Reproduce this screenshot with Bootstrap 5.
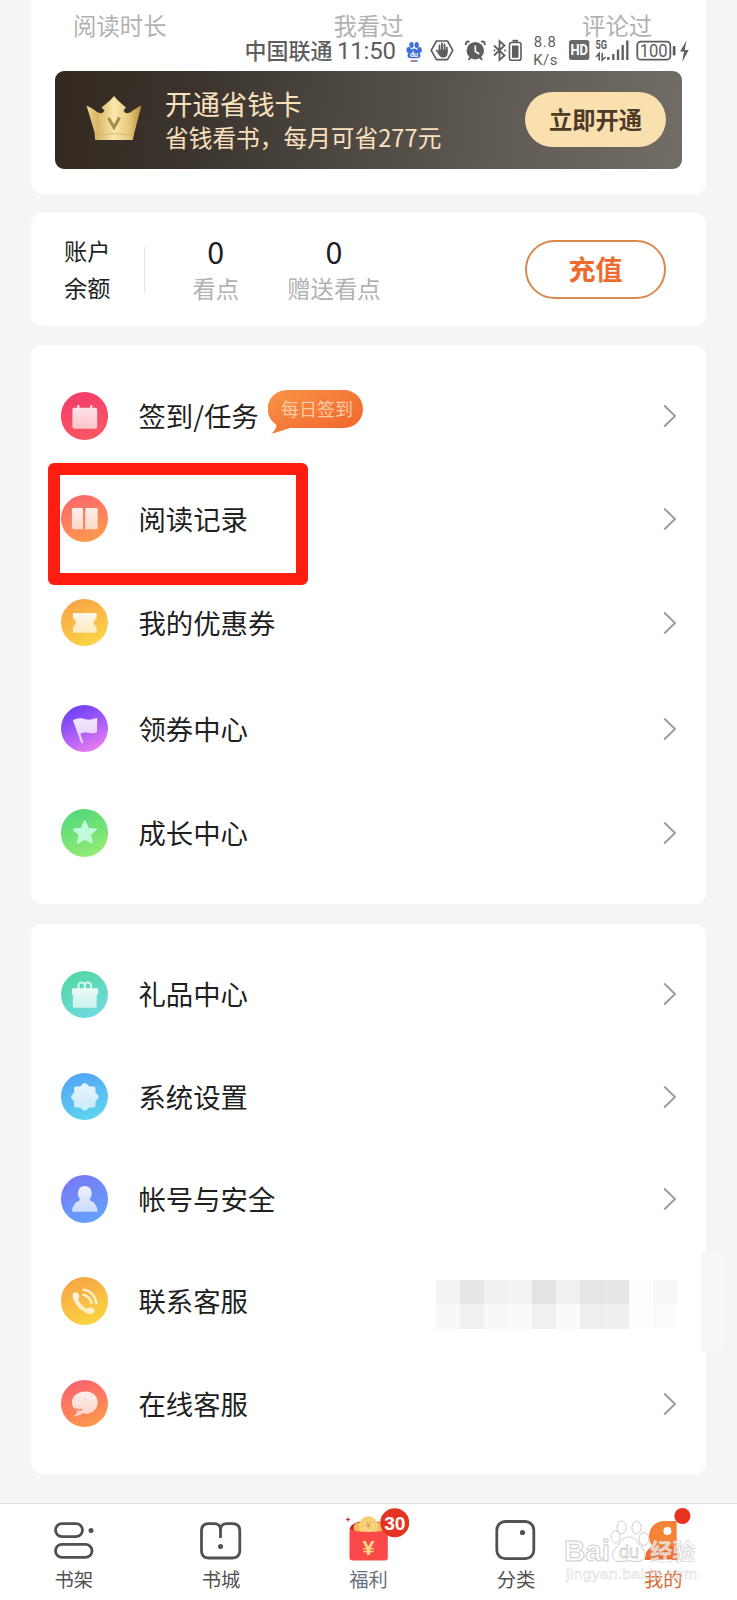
<!DOCTYPE html>
<html lang="zh-CN">
<head>
<meta charset="utf-8">
<meta name="viewport" content="width=device-width, initial-scale=1">
<title>我的</title>
<link rel="stylesheet" href="https://cdn.jsdelivr.net/npm/bootstrap@5.3.0/dist/css/bootstrap.min.css">
<style>
body{background:#f5f5f5;font-family:"Noto Sans CJK SC",sans-serif;color:#1f1f1f;width:737px;height:1600px;overflow:hidden}
svg{display:block;flex:none}
.panel{margin:0 31px;background:#fff;border-radius:11px;position:relative}
.muted{color:#b2b2b2;font-size:23.4px;line-height:30px}
/* header card */
.head-card{height:194px;border-radius:0 0 11px 11px;padding:10px 24px 0}
.stats{height:61px;margin:0 -59.5px}
.promo{height:98px;border-radius:9px;background:linear-gradient(97deg,#33291f 0,#3b342e 22%,#504a45 50%,#635e58 76%,#716d66 100%);padding:0 16px 0 31px;color:#fbe0bd}
.crown{margin-top:-4px}
.promo-title{font-size:27.4px;line-height:34px}
.promo-sub{font-size:23.7px;line-height:35px}
.promo-btn{width:141px;height:55px;margin-top:-1px;padding-bottom:1px;background:#fbe0af;color:#4b3b27;font-weight:700;font-size:23.3px}
/* status bar */
.status{top:34px;left:240px;height:34px;color:#5e5e5e}
/* balance */
.balance{height:112.5px;margin-top:19.3px;padding:0 40px 0 33px}
.bal-name{font-size:23.2px;line-height:37px;margin-top:-2px}
.bal-line{width:1px;height:46px;background:#e3e3e3}
.bal-num{font-size:30.5px;line-height:36px;margin-top:-4px;margin-bottom:4px}
.charge{width:141px;height:59px;border:2.4px solid #d78a4d;color:#ef6a2c;font-weight:700;font-size:27px}
/* menu */
.menu-a{height:558.5px;margin-top:19.5px;padding:19.8px 29px 0 29.8px;display:grid;grid-template-rows:102.4px 102.2px 105.8px 106.2px 103.2px}
.menu-b{height:550px;margin-top:20.2px;padding:19.2px 29px 0 29.8px;display:grid;grid-template-rows:repeat(5,102.3px)}
.item{font-size:27.4px;line-height:40px}
.disc{width:47.6px;height:47.6px;border-radius:50%;margin-right:30px;flex:none}
.label{margin-top:-2px}
.c1{background:linear-gradient(160deg,#f23a6c,#fb5b60)}
.c2{background:linear-gradient(160deg,#fb6270,#fda048)}
.c3{background:linear-gradient(155deg,#f79e48,#fbdc45)}
.c4{background:linear-gradient(155deg,#6b3ff5 10%,#a55cf8 50%,#fb86ee)}
.c5{background:linear-gradient(160deg,#4cd67b,#9cee72)}
.c6{background:linear-gradient(155deg,#50d69a,#74dbe8)}
.c7{background:linear-gradient(160deg,#519ff8,#5fdcea)}
.c8{background:linear-gradient(155deg,#7c74f7,#5fa9fb)}
.c9{background:linear-gradient(155deg,#f79e48,#fbdc3f)}
.c10{background:linear-gradient(160deg,#fb5b72,#fda048)}
.go{margin-left:auto}
.tip{margin:-8px 0 0 9.5px}
.frame{left:16.6px;top:118px;width:260.7px;height:121.7px;border:12.2px solid #ff1e10;border-radius:6px}
.mosaic{display:grid;grid-template:24.3px 24.3px/repeat(10,24.15px);margin:6px 0 0 auto}
.patch{left:669.7px;top:328.5px;width:23px;height:99px;background:#f6f6f6}
/* tab bar */
.tabs{margin-top:29.3px;height:97px;background:#fff;border-top:1.5px solid #dedede}
.tab{flex:1 1 0;font-size:19.3px;line-height:28px;color:#515151;padding-top:1px}
.on{color:#d9662c}
.water{left:560px;top:1515px}
</style>
</head>
<body class="position-relative">
<svg width="0" height="0" class="position-absolute">
  <defs>
    <linearGradient id="glass" x1="0" y1="0" x2="0" y2="1"><stop offset="0" stop-color="#fff" stop-opacity=".88"/><stop offset="1" stop-color="#fff" stop-opacity=".66"/></linearGradient>
    <linearGradient id="gold" x1="0" y1="0" x2="1" y2="0"><stop offset="0" stop-color="#f0d68d"/><stop offset=".2" stop-color="#d9b767"/><stop offset=".5" stop-color="#f9e7ac"/><stop offset=".78" stop-color="#e6c87b"/><stop offset="1" stop-color="#b98d3a"/></linearGradient>
    <linearGradient id="orange" x1="0" y1="0" x2="1" y2="1"><stop offset="0" stop-color="#f99447"/><stop offset="1" stop-color="#f0622a"/></linearGradient>
    <symbol id="chev" viewBox="0 0 14 24"><path d="M1.2 1.5 12 12 1.2 22.5" fill="none" stroke="#9b9b9b" stroke-width="1.9"/></symbol>
  </defs>
</svg>

<section class="panel head-card">
  <div class="stats d-flex text-center muted">
    <div class="flex-fill w-100">阅读时长</div><div class="flex-fill w-100">我看过</div><div class="flex-fill w-100">评论过</div>
  </div>
  <div class="promo d-flex align-items-center">
    <svg class="crown" width="56" height="46" viewBox="0 0 56 46"><path d="M.5 10.500Q8 14 11 17Q13 18.500 16.500 18L18.500 15.500L15.500 12.500Q24 6 28 1Q32 6 40 12.500L37.500 15.500L39.500 18Q43 18.500 45 17Q48 14 55.500 10.500L48.500 37L46.800 45H9.200L8.500 37Z" fill="url(#gold)"/><path d="M9 40Q28 37.500 47.500 40" stroke="#d2af65" stroke-width=".8" fill="none"/><path d="M22.500 23 28 32.500 33.500 22.500" stroke="#a58a4b" stroke-width="3" fill="none"/></svg>
    <div style="margin-left:23px"><div class="promo-title">开通省钱卡</div><div class="promo-sub">省钱看书，每月可省277元</div></div>
    <div class="promo-btn rounded-pill ms-auto d-flex align-items-center justify-content-center">立即开通</div>
  </div>
</section>

<div class="status position-absolute">
<svg width="460" height="34" viewBox="240 34 460 34" fill="#5e5e5e">
  <text x="244.500" y="58.900" font-size="22" font-weight="500">中国联通</text>
  <text x="337" y="59" font-size="24" font-family="Roboto, sans-serif" textLength="59">11:50</text>
  <g fill="#3f6fd8"><ellipse cx="408.700" cy="50" rx="2.300" ry="3"/><ellipse cx="411.500" cy="45" rx="2.200" ry="2.900"/><ellipse cx="416.700" cy="45" rx="2.200" ry="2.900"/><ellipse cx="419.500" cy="50" rx="2.300" ry="3"/><path d="M414 48.500c3 0 6.500 5 6.500 7.300s-3 2.500-6.500 2.500-6.500 0-6.500-2.500 3.500-7.300 6.500-7.300"/></g>
  <text x="410" y="57" font-size="7" font-weight="700" fill="#fff" font-family="Roboto">du</text><path d="M410.500 61h3.500" stroke="#d44" stroke-width="1.500"/><path d="M414 61h3.500" stroke="#3f6fd8" stroke-width="1.500"/>
  <path d="M436.500 41h11l5.300 9.300-5.300 9.400h-11l-5.300-9.400z" fill="none" stroke="#5e5e5e" stroke-width="1.700" stroke-linejoin="round"/>
  <path d="M439.500 51v-5.500M442 50v-6.500M444.500 50v-5.500M446.800 51v-3.500M436.700 50.500l3 3.500" stroke="#5e5e5e" stroke-width="1.800" stroke-linecap="round"/><path d="M438.600 49.500h9.100v3.500q-.5 4-3.200 4.500h-3q-2-1-3.500-4z"/>
  <circle cx="475.300" cy="50.700" r="8.700"/><path d="M469.500 41.800q-3.500-1.500-3.700 3.200M481.100 41.800q3.500-1.500 3.700 3.200M468.500 59.800l2.500-3M482.100 59.800l-2.500-3" fill="none" stroke="#5e5e5e" stroke-width="2"/><path d="M475.300 45.500v6l4 2.500" fill="none" stroke="#fff" stroke-width="1.600"/>
  <path d="M494 45.500 504.500 55.500 499.500 60V41L504.500 45.500 494 55.500" fill="none" stroke="#5e5e5e" stroke-width="1.800"/><circle cx="494.500" cy="50.500" r="1"/><circle cx="505" cy="50.500" r="1"/>
  <rect x="509.500" y="42.500" width="11.500" height="17.700" rx="2" fill="none" stroke="#5e5e5e" stroke-width="1.600"/><rect x="512" y="45.500" width="6.500" height="12.300"/><rect x="512.500" y="39.800" width="5.500" height="2"/>
  <g font-family="Roboto, sans-serif"><text x="533.800" y="46.800" font-size="14.800" textLength="22">8.8</text><text x="533.300" y="65" font-size="14.800" textLength="24">K/s</text></g>
  <rect x="569" y="40" width="20.300" height="20" rx="2.500" fill="#696969"/><text x="570.500" y="55.300" font-size="14" font-weight="700" fill="#fff" font-family="Roboto" textLength="17.500" lengthAdjust="spacingAndGlyphs">HD</text>
  <text x="595.500" y="49" font-size="12" font-weight="700" font-family="Roboto" textLength="11.500" lengthAdjust="spacingAndGlyphs">5G</text>
  <path d="M596 57l3.200-3.500v7M602.200 53v7l3.500-3" fill="none" stroke="#5e5e5e" stroke-width="1.600"/>
  <path d="M608.300 60v-3M613.300 60v-6M618 60V49.500M622.700 60V45M627.300 60V40.500" stroke="#5e5e5e" stroke-width="2.300"/>
  <rect x="637.300" y="41.700" width="33" height="18" rx="3.500" fill="none" stroke="#5e5e5e" stroke-width="1.800"/><text x="639.700" y="57" font-size="17.500" font-family="Roboto" textLength="28" lengthAdjust="spacingAndGlyphs">100</text><rect x="672.800" y="46" width="2.700" height="9.500" rx="1"/>
  <path d="M686.500 40.500 680 51.500h4l-1.800 10.500 6.500-12h-4z"/>
</svg>
</div>

<section class="panel balance d-flex align-items-center">
  <div class="bal-name">账户<br>余额</div>
  <div class="bal-line" style="margin-left:34px"></div>
  <div class="text-center" style="margin-left:47px"><div class="bal-num">0</div><div class="muted">看点</div></div>
  <div class="text-center" style="margin-left:48px"><div class="bal-num">0</div><div class="muted">赠送看点</div></div>
  <div class="charge rounded-pill ms-auto d-flex align-items-center justify-content-center">充值</div>
</section>

<section class="panel menu-a">
  <div class="item d-flex align-items-center"><div class="disc c1"><svg viewBox="0 0 48 48" fill="url(#glass)"><path d="M13.500 16h3v-3h2v3h11v-3h2v3h3q2 0 2 2v17q0 2-2 2h-21q-2 0-2-2V18q0-2 2-2z"/></svg></div><span class="label">签到/任务</span>
    <svg class="tip" width="96" height="46" viewBox="0 0 96 46"><path d="M20 1H76A19 19 0 0 1 76 39H22Q13 42 3 45Q8 41 8.500 36A19 19 0 0 1 20 1Z" fill="url(#orange)"/><text x="13" y="26.500" font-size="18" fill="#ffcaa3">每日签到</text></svg>
    <svg class="go" width="14" height="24"><use href="#chev"/></svg></div>
  <div class="item d-flex align-items-center"><div class="disc c2"><svg viewBox="0 0 48 48" fill="url(#glass)"><path d="M12.500 13H22.200V33.500Q23 34 22.500 35L21.500 34.500H12.500Q11 34.500 11 33V14.500Q11 13 12.500 13zM25.500 13H35.500Q37 13 37 14.500V33Q37 34.500 35.500 34.500H26L24.500 35.500V14z"/></svg></div><span class="label">阅读记录</span><svg class="go" width="14" height="24"><use href="#chev"/></svg></div>
  <div class="item d-flex align-items-center"><div class="disc c3"><svg viewBox="0 0 48 48" fill="url(#glass)"><path d="M13.500 14h21q1.500 0 1.500 1.500v4q-3 1.500-3 4.500t3 4.500v4q0 1.500-1.500 1.500h-21q-1.500 0-1.500-1.500v-4q3-1.500 3-4.500t-3-4.500v-4q0-1.500 1.500-1.500z"/></svg></div><span class="label">我的优惠券</span><svg class="go" width="14" height="24"><use href="#chev"/></svg></div>
  <div class="item d-flex align-items-center"><div class="disc c4"><svg viewBox="0 0 48 48" fill="url(#glass)"><path d="M12 15.500Q15 13 22 13.500Q26 15 29 15Q32 14 36 13Q37 13 36.500 15L36.300 27Q33 29.500 28 28Q23 27 19.500 29L22.500 37.500Q23 39 20.500 38.500Z"/></svg></div><span class="label">领券中心</span><svg class="go" width="14" height="24"><use href="#chev"/></svg></div>
  <div class="item d-flex align-items-center"><div class="disc c5"><svg viewBox="0 0 48 48" fill="#c0fbdc" stroke="#c0fbdc" stroke-width="2" stroke-linejoin="round"><path d="M24 12.500 27.300 19.800 35 20.700 29.300 26 31 34 24 30 17 34 18.700 26 13 20.700 20.700 19.800Z"/></svg></div><span class="label">成长中心</span><svg class="go" width="14" height="24"><use href="#chev"/></svg></div>
  <div class="frame position-absolute"></div>
</section>

<section class="panel menu-b">
  <div class="item d-flex align-items-center"><div class="disc c6"><svg viewBox="0 0 48 48"><path fill="url(#glass)" d="M12 17.500h24q1.500 0 1.500 1.500v4q0 1-1.500 1.200V36q0 1-1.500 1h-21q-1.500 0-1.500-1V24.200Q11 24 11 23v-4q0-1.500 1-1.500z"/><g fill="none" stroke="#dcfaf0" stroke-width="2"><path d="M18 18q-1.500-6 2.500-6.500t3.500 6.500q-.5-7 3.500-6.500t2.500 6.500"/></g></svg></div><span class="label">礼品中心</span><svg class="go" width="14" height="24"><use href="#chev"/></svg></div>
  <div class="item d-flex align-items-center"><div class="disc c7"><svg viewBox="0 0 48 48" fill="url(#glass)"><path d="M24 10Q25.500 10 28.500 13.500H33Q34.800 13.500 34.800 15.300V20Q38 22.500 38 24T34.800 28.500V33Q34.800 34.800 33 34.800H28.500Q25.500 38 24 38T19.500 34.800H15Q13.200 34.800 13.200 33V28.500Q10 25.500 10 24T13.200 20V15.300Q13.200 13.500 15 13.500H19.500Q22.500 10 24 10Z"/></svg></div><span class="label">系统设置</span><svg class="go" width="14" height="24"><use href="#chev"/></svg></div>
  <div class="item d-flex align-items-center"><div class="disc c8"><svg viewBox="0 0 48 48" fill="url(#glass)"><path d="M24 11a7 7 0 0 1 7 7.500Q31 22.500 28.500 25.200Q36.500 28 37 37H11Q11.500 28 19.500 25.200Q17 22.500 17 18.500A7 7 0 0 1 24 11Z"/></svg></div><span class="label">帐号与安全</span><svg class="go" width="14" height="24"><use href="#chev"/></svg></div>
  <div class="item d-flex align-items-center"><div class="disc c9"><svg viewBox="0 0 48 48"><path fill="url(#glass)" d="M12 17Q14 14.500 16 16Q19 18.500 18.300 20.500Q16.500 22.500 18 24.500Q21 29 25 31.500Q27 32.500 28.500 30.500Q30 29.500 33 32Q35 34 33 36Q29.500 38.500 25 36Q17 32 13 24Q11 20 12 17Z"/><path d="M22 12.500Q34 14.500 36 27.500M21.500 17.500Q29.500 19.500 31 27" stroke="#fff1cf" stroke-width="2.300" fill="none"/></svg></div><span class="label">联系客服</span>
    <div class="mosaic"><i style="background:#f3f3f3"></i><i style="background:#e7e7e7"></i><i style="background:#f1f1f1"></i><i style="background:#f2f2f2"></i><i style="background:#e3e3e3"></i><i style="background:#f0f0f0"></i><i style="background:#e6e6e6"></i><i style="background:#e7e7e7"></i><i style="background:#fdfdfd"></i><i style="background:#f7f7fa"></i><i style="background:#f8f8f8"></i><i style="background:#f0f0f0"></i><i style="background:#f8f8f8"></i><i style="background:#fafafa"></i><i style="background:#f0f0f0"></i><i style="background:#fafafa"></i><i style="background:#eee"></i><i style="background:#efefef"></i><i style="background:#fdfdfd"></i><i style="background:#fbfbfb"></i></div></div>
  <div class="item d-flex align-items-center"><div class="disc c10"><svg viewBox="0 0 48 48"><path fill="url(#glass)" d="M25 11.500C33 11.500 37 17 37 22.500C37 29 32 34 25.500 34Q23.500 34 22 33.500Q18 37 13 36Q16 34.500 16.500 31.500Q11 28.500 11 22.500C11 17 16 11.500 25 11.500Z"/><path d="M14 28.500Q18 31.500 21.500 29.500" stroke="#fc8a62" stroke-width="1.600" fill="none"/></svg></div><span class="label">在线客服</span><svg class="go" width="14" height="24"><use href="#chev"/></svg></div>
  <div class="patch position-absolute"></div>
</section>

<nav class="tabs d-flex">
  <div class="tab d-flex flex-column align-items-center"><svg width="80" height="60" viewBox="-40 5 80 60" fill="none" stroke="#515151" stroke-width="2.800"><rect x="-18.500" y="23.600" width="27" height="13" rx="6.500"/><rect x="-18.500" y="44.400" width="36.500" height="13" rx="6.500"/><circle cx="17" cy="30.500" r="2.500" fill="#515151" stroke="none"/></svg>书架</div>
  <div class="tab d-flex flex-column align-items-center"><svg width="80" height="60" viewBox="-40 5 80 60" fill="none" stroke="#515151" stroke-width="2.800"><path d="M-.5 38V30Q-.5 23.600-7 23.600H-12.500Q-19.500 23.600-19.500 31V50.500Q-19.500 58-12.500 58H11.500Q18.800 58 18.800 50.500V31Q18.800 23.600 11.500 23.600H6Q-.5 23.600-.5 30"/><circle cx="-.5" cy="46.500" r="2.500" fill="#515151" stroke="none"/></svg>书城</div>
  <div class="tab d-flex flex-column align-items-center" style="color:#66717c"><svg width="80" height="60" viewBox="-40 5 80 60"><path d="M-21 17.500v4M-23 19.500h4" stroke="#d32f2f" stroke-width="1.200"/><ellipse cx="-.5" cy="29" rx="18.500" ry="8.500" fill="#c91f24"/><circle cx="-10" cy="28" r="5.500" fill="#f5bd5c"/><circle cx="10" cy="28" r="5.500" fill="#f5bd5c"/><circle cx="-.5" cy="25.500" r="9.500" fill="#f9d582"/><circle cx="-.5" cy="25.500" r="7" fill="none" stroke="#f2c468"/><text x="-3.300" y="29" font-size="10" font-family="Liberation Sans" fill="#e0a23d">¥</text><path d="M-19.500 28.500Q-14 32-.5 32T18.800 28.500V57.500Q18.800 60.500 15.800 60.500H-16.500Q-19.500 60.500-19.500 57.500Z" fill="#fb4848"/><text x="-6.800" y="54.500" font-size="20" font-weight="700" font-family="Liberation Sans" fill="#fbdc85" textLength="12.500" lengthAdjust="spacingAndGlyphs">¥</text><circle cx="25.800" cy="22.700" r="14.500" fill="#e43421"/><text x="25.800" y="29.600" text-anchor="middle" font-size="19.200" font-weight="700" font-family="Liberation Sans" fill="#fff">30</text></svg>福利</div>
  <div class="tab d-flex flex-column align-items-center"><svg width="80" height="60" viewBox="-40 5 80 60"><rect x="-19.200" y="21.500" width="37" height="37.200" rx="8.500" fill="none" stroke="#515151" stroke-width="2.800"/><circle cx="6.500" cy="32.500" r="2.600" fill="#515151"/></svg>分类</div>
  <div class="tab on d-flex flex-column align-items-center"><svg width="80" height="60" viewBox="-40 5 80 60"><path d="M13.700 21V43Q12 46 14.500 50V60H-18Q-18 50-10.500 46Q-14 42-14 37C-14 27-7 21 2 21Z" fill="#f58336"/><path d="M-18 60Q-18 50-10.500 46L14 46V60Z" fill="#f26c2e"/><circle cx="4.400" cy="31" r="4" fill="#fff"/><circle cx="19.400" cy="16" r="8" fill="#e9321f"/></svg>我的</div>
</nav>

<div class="water position-absolute">
<svg width="145" height="68" viewBox="560 1515 145 68" fill="#fff" fill-opacity=".7" stroke="#cdcdcd" stroke-width="1" font-family="Liberation Sans, Noto Sans CJK SC" font-weight="700">
  <text x="564" y="1561" font-size="30" textLength="46" lengthAdjust="spacingAndGlyphs">Bai</text>
  <ellipse cx="615.500" cy="1537" rx="4.500" ry="6"/><ellipse cx="621.500" cy="1527.500" rx="4.500" ry="6.500"/><ellipse cx="636.500" cy="1527.500" rx="4.500" ry="6.500"/><ellipse cx="644" cy="1539" rx="5" ry="6.500"/>
  <path d="M629 1537C636 1537 638 1544 643 1549C648 1556 644 1562 637 1561.500Q629 1560 621 1561.500C613 1562 610 1555 615 1549C620 1544 622 1537 629 1537Z"/>
  <text x="619" y="1558" font-size="18" font-weight="400" stroke-width=".8" textLength="20">du</text>
  <text x="650" y="1560" font-size="22.500" font-family="Noto Sans CJK SC" stroke-width=".6">经验</text>
  <text x="566" y="1579" font-size="15.500" font-weight="400" fill-opacity=".35" stroke-width=".5" stroke-opacity=".8" textLength="131">jingyan.baidu.com</text>
</svg>
</div>
<script src="https://cdn.jsdelivr.net/npm/bootstrap@5.3.0/dist/js/bootstrap.bundle.min.js"></script>
</body>
</html>
